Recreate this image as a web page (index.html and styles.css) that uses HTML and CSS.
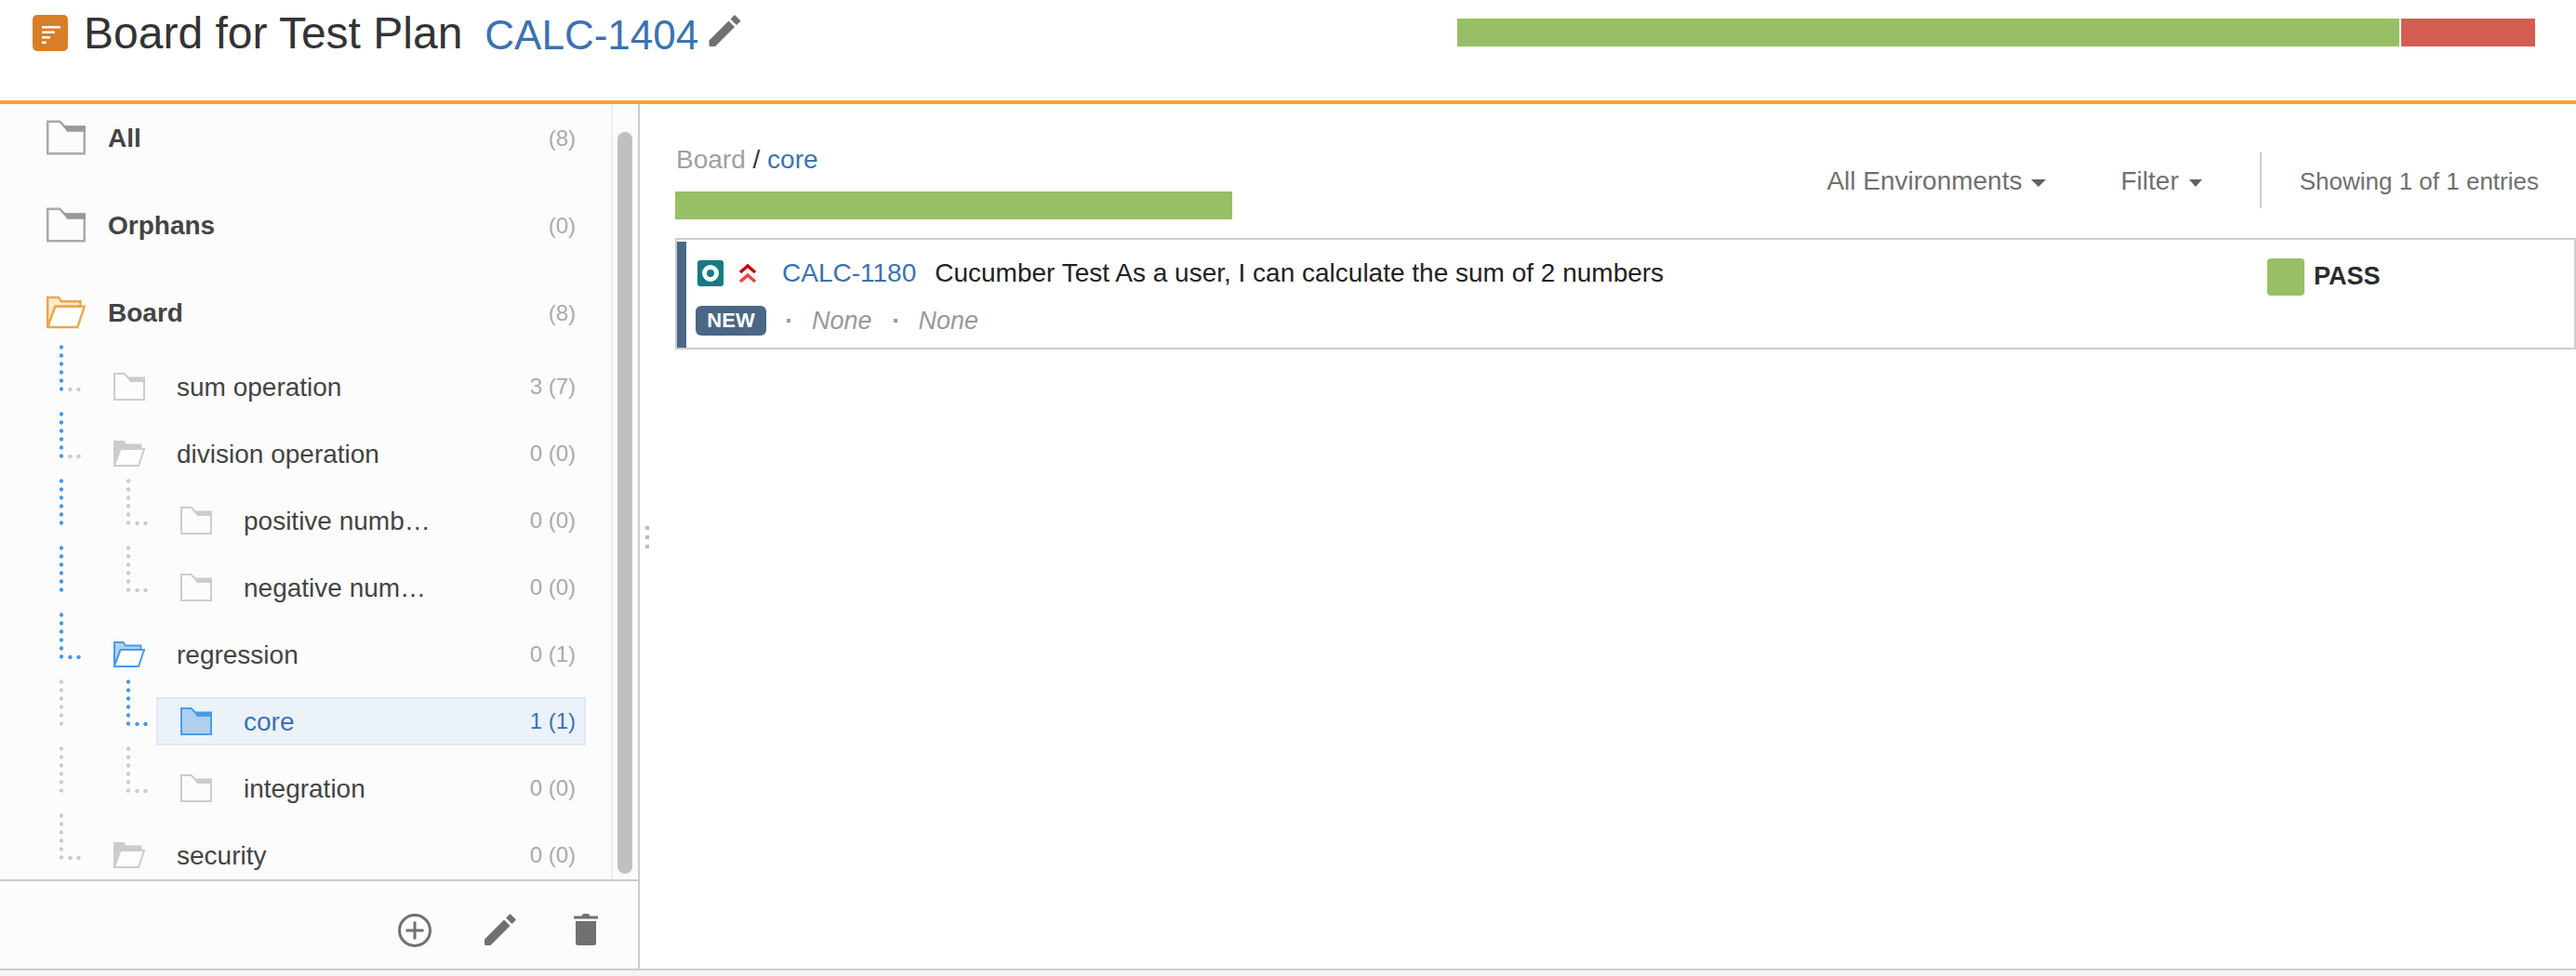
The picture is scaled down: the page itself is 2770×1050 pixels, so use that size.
FILE: index.html
```html
<!DOCTYPE html>
<html lang="en">
<head>
<meta charset="utf-8">
<title>Board for Test Plan</title>
<link rel="stylesheet" href="styles.css">
</head>
<body>
<svg class="defs" width="0" height="0" aria-hidden="true">
  <symbol id="closed" viewBox="0 0 34 30">
    <path class="fold-body" d="M1 1H11.500L16 5.500H33V29H1Z"/>
    <path class="fold-band" d="M11.500 1L16 5H34V10H18Z"/>
  </symbol>
  <symbol id="open" viewBox="0 0 34 28">
    <path class="fold-back" d="M1 27V1H10.500L13 4.500H29.500V9H8Z"/>
    <path class="fold-front" d="M7.500 9H33L27 27H1Z"/>
  </symbol>
  <symbol id="pencil" viewBox="0 0 34 34">
    <path d="M0 27.500L21 6.500L27.500 13L6.500 34H1.500Q0 34 0 32.500Z"/>
    <path d="M23 4.500L27.500 0L34 6.500L29.500 11Z"/>
  </symbol>
</svg>

<header class="topbar">
  <span class="plan-icon">
    <svg viewBox="0 0 38 39" width="38" height="39"><path class="plan-lines" d="M10 12H30V14.500H10ZM10 17.500H24V20H10ZM10 23H19V25.500H10ZM10 28.500H15V31H10Z"/></svg>
  </span>
  <h1 class="title">Board for Test Plan</h1>
  <a class="plan-key">CALC-1404</a>
  <svg class="title-pencil"><use href="#pencil"/></svg>
  <div class="overall">
    <span class="overall-pass"></span>
    <span class="overall-fail"></span>
  </div>
</header>

<main class="workspace">
  <aside class="sidebar">
    <div class="sidebar-scroll">
      <div class="folders">
        <div class="root-row">
          <svg class="root-icon tone-dark"><use href="#closed"/></svg>
          <span class="root-name">All</span><span class="count">(8)</span>
        </div>
        <div class="root-row">
          <svg class="root-icon tone-dark"><use href="#closed"/></svg>
          <span class="root-name">Orphans</span><span class="count">(0)</span>
        </div>
        <div class="root-row root-last">
          <svg class="root-icon tone-orange"><use href="#open"/></svg>
          <span class="root-name">Board</span><span class="count">(8)</span>
        </div>

        <div class="tree-row">
          <span class="guide elbow"><i class="v blue"></i><i class="h"></i></span>
          <div class="label">
            <svg class="leaf-icon tone-gray"><use href="#closed"/></svg>
            <span class="name">sum operation</span><span class="count">3 (7)</span>
          </div>
        </div>
        <div class="tree-row">
          <span class="guide elbow"><i class="v blue"></i><i class="h"></i></span>
          <div class="label">
            <svg class="open-icon tone-solid"><use href="#open"/></svg>
            <span class="name">division operation</span><span class="count">0 (0)</span>
          </div>
        </div>
        <div class="tree-row">
          <span class="pipe"><i class="v blue"></i></span>
          <span class="guide elbow"><i class="v"></i><i class="h"></i></span>
          <div class="label">
            <svg class="leaf-icon tone-gray"><use href="#closed"/></svg>
            <span class="name">positive numb…</span><span class="count">0 (0)</span>
          </div>
        </div>
        <div class="tree-row">
          <span class="pipe"><i class="v blue"></i></span>
          <span class="guide elbow"><i class="v"></i><i class="h"></i></span>
          <div class="label">
            <svg class="leaf-icon tone-gray"><use href="#closed"/></svg>
            <span class="name">negative num…</span><span class="count">0 (0)</span>
          </div>
        </div>
        <div class="tree-row">
          <span class="guide elbow"><i class="v blue"></i><i class="h blue"></i></span>
          <div class="label">
            <svg class="open-icon tone-blue"><use href="#open"/></svg>
            <span class="name">regression</span><span class="count">0 (1)</span>
          </div>
        </div>
        <div class="tree-row">
          <span class="pipe"><i class="v"></i></span>
          <span class="guide elbow"><i class="v blue"></i><i class="h blue"></i></span>
          <div class="label selected">
            <svg class="leaf-icon tone-selected"><use href="#closed"/></svg>
            <span class="name">core</span><span class="count">1 (1)</span>
          </div>
        </div>
        <div class="tree-row">
          <span class="pipe"><i class="v"></i></span>
          <span class="guide elbow"><i class="v"></i><i class="h"></i></span>
          <div class="label">
            <svg class="leaf-icon tone-gray"><use href="#closed"/></svg>
            <span class="name">integration</span><span class="count">0 (0)</span>
          </div>
        </div>
        <div class="tree-row">
          <span class="guide elbow"><i class="v"></i><i class="h"></i></span>
          <div class="label">
            <svg class="open-icon tone-solid"><use href="#open"/></svg>
            <span class="name">security</span><span class="count">0 (0)</span>
          </div>
        </div>
      </div>
      <div class="scroll-track"><span class="scroll-thumb"></span></div>
    </div>
    <div class="sidebar-actions">
      <svg class="act-plus" viewBox="0 0 36 36"><circle cx="18" cy="18" r="16.500"/><path d="M18 8.500V27.500M8.500 18H27.500"/></svg>
      <svg class="act-pencil"><use href="#pencil"/></svg>
      <svg class="act-trash" viewBox="0 0 26 34"><path d="M0 2.500H8.500Q9 0 11 0H15Q17 0 17.500 2.500H26V5.500H0ZM2 8H24V31.500Q24 34 21.500 34H4.500Q2 34 2 31.500Z"/></svg>
    </div>
  </aside>
  <span class="splitter"><i></i><i></i><i></i></span>

  <section class="content">
    <div class="toolbar">
      <div class="crumb-block">
        <div class="crumbs"><span class="crumb-root">Board</span> / <a class="crumb-leaf">core</a></div>
        <div class="folder-progress"></div>
      </div>
      <div class="tools">
        <span class="tool env">All Environments<i class="caret"></i></span>
        <span class="tool filter">Filter<i class="caret"></i></span>
        <span class="tools-sep"></span>
        <span class="entries">Showing 1 of 1 entries</span>
      </div>
    </div>

    <article class="test-card">
      <span class="card-stripe"></span>
      <div class="card-main">
        <div class="card-line">
          <span class="type-icon"></span>
          <svg class="prio" viewBox="0 0 20 22"><path class="prio-hi" d="M2 10L10 3L18 10"/><path class="prio-lo" d="M2 20L10 13L18 20"/></svg>
          <a class="test-key">CALC-1180</a>
          <span class="test-title">Cucumber Test As a user, I can calculate the sum of 2 numbers</span>
        </div>
        <div class="card-meta">
          <span class="badge">NEW</span>
          <span class="sep"></span>
          <em class="none">None</em>
          <span class="sep"></span>
          <em class="none">None</em>
        </div>
      </div>
      <div class="card-status">
        <span class="status-box"></span>
        <span class="status-text">PASS</span>
      </div>
    </article>
  </section>
</main>
<div class="page-foot"></div>
</body>
</html>
```

FILE: styles.css
```css
* { box-sizing: border-box; }
html, body { margin: 0; padding: 0; }
body {
  width: 2770px;
  height: 1050px;
  overflow: hidden;
  background: #fff;
  font-family: "Liberation Sans", Arial, sans-serif;
  color: #333;
  display: flex;
  flex-direction: column;
}
.defs { display: block; height: 0; }

/* header */
.topbar {
  flex: none;
  height: 112px;
  border-bottom: 4px solid #ffa42a;
  display: flex;
  align-items: flex-start;
  padding-left: 35px;
}
.plan-icon {
  flex: none;
  width: 38px;
  height: 39px;
  margin-top: 16px;
  border-radius: 5px;
  background: #d67f28;
  display: block;
}
.plan-icon svg { display: block; }
.plan-lines { fill: #fff; }
.title {
  margin: 8px 0 0 17px;
  font-size: 48px;
  line-height: 56px;
  font-weight: 400;
  color: #333;
}
.plan-key {
  margin: 10px 0 0 24px;
  font-size: 44px;
  line-height: 56px;
  color: #3b73af;
}
.title-pencil {
  flex: none;
  width: 35px;
  height: 34px;
  margin: 16px 0 0 11px;
  fill: #707070;
}
.overall {
  margin: 20px 44px 0 auto;
  width: 1159px;
  height: 30px;
  display: flex;
  gap: 2px;
}
.overall-pass { flex: 1013; background: #97bf65; }
.overall-fail { flex: 144; background: #d45d52; }

/* layout */
.workspace {
  flex: none;
  height: 930px;
  display: flex;
  position: relative;
}
.page-foot {
  flex: 1;
  border-top: 2px solid #ccc;
  background: #f5f5f5;
}

/* sidebar */
.sidebar {
  flex: none;
  width: 688px;
  border-right: 2px solid #ccc;
  background: #fcfcfc;
  display: flex;
  flex-direction: column;
}
.sidebar-scroll {
  flex: none;
  height: 834px;
  display: flex;
  overflow: hidden;
}
.folders { flex: none; width: 657px; }
.scroll-track {
  flex: none;
  width: 29px;
  border-left: 2px solid #eee;
  background: #fbfbfb;
  padding: 30px 0 0 5px;
}
.scroll-thumb {
  display: block;
  width: 16px;
  height: 798px;
  border-radius: 8px;
  background: #c0c0c0;
}
.root-row {
  height: 94px;
  padding: 17px 38px 0 50px;
  display: flex;
  align-items: flex-start;
}
.root-last { height: 71px; }
.root-icon { flex: none; width: 42px; height: 38px; }
.root-name {
  flex: 1;
  margin-left: 24px;
  font-size: 28px;
  line-height: 40px;
  font-weight: 700;
  color: #444;
}
.count {
  flex: none;
  font-size: 24px;
  line-height: 40px;
  color: #aaa;
}

/* icon tones */
.fold-body { fill: var(--fill, none); stroke: var(--line); stroke-width: 2; }
.fold-band { fill: var(--band); }
.fold-back { fill: var(--tint); stroke: var(--line); stroke-width: 2; }
.fold-front { fill: var(--face); stroke: var(--line); stroke-width: 2; }
.tone-dark { --line: #aaa; --band: #999; }
.tone-gray { --line: #ccc; --band: #ccc; }
.tone-orange { --line: #e8a84c; --tint: #fdebd0; --face: #fff; }
.tone-solid { --line: #ccc; --tint: #ccc; --face: #fdfdfd; }
.tone-blue { --line: #4a9be8; --tint: #aed0ee; --face: #fff; }
.tone-selected { --line: #4a9be8; --band: #4a9be8; --fill: #aed0ee; }

/* tree */
.tree-row {
  height: 72px;
  padding: 0 27px 0 64px;
  display: flex;
  align-items: flex-start;
}
.pipe { flex: none; width: 72px; display: block; }
.guide { flex: none; width: 32px; display: block; position: relative; }
.v {
  display: block;
  width: 4px;
  height: 50px;
  background-image: radial-gradient(circle at center, #ccc 2px, transparent 2.2px);
  background-size: 4px 9px;
  background-position: 0 -2px;
}
.h {
  position: absolute;
  left: 7px;
  top: 46px;
  width: 18px;
  height: 4px;
  background-image: radial-gradient(circle at center, #ccc 2px, transparent 2.2px);
  background-size: 9px 4px;
}
.v.blue, .h.blue {
  background-image: radial-gradient(circle at center, #4a9be8 2px, transparent 2.2px);
}
.label {
  flex: 1;
  min-width: 0;
  height: 52px;
  margin-top: 19px;
  padding: 0 9px 0 24px;
  border: 2px solid transparent;
  display: flex;
  align-items: center;
}
.label.selected { background: #ebf2fa; border-color: #e0e8f3; }
.label.selected .name, .label.selected .count { color: #3b73af; }
.leaf-icon { flex: none; width: 34px; height: 30px; }
.open-icon { flex: none; width: 34px; height: 28px; }
.name {
  flex: 1;
  min-width: 0;
  margin: 2px 0 0 34px;
  font-size: 28px;
  line-height: 40px;
  color: #444;
  white-space: nowrap;
}

/* sidebar actions */
.sidebar-actions {
  flex: 1;
  border-top: 2px solid #ccc;
  padding: 35px 43px 0 0;
  display: flex;
  justify-content: flex-end;
  align-items: flex-start;
}
.act-plus {
  flex: none;
  width: 36px;
  height: 36px;
  margin-right: 57px;
  fill: none;
  stroke: #707070;
  stroke-width: 3;
}
.act-pencil {
  flex: none;
  width: 34px;
  height: 34px;
  margin-right: 62px;
  fill: #707070;
}
.act-trash { flex: none; width: 26px; height: 34px; fill: #707070; }

.splitter {
  position: absolute;
  left: 694px;
  top: 454px;
  display: flex;
  flex-direction: column;
  gap: 6px;
}
.splitter i { display: block; width: 4px; height: 4px; background: #bbb; }

/* content */
.content {
  flex: 1;
  min-width: 0;
  padding-left: 38px;
  background: #fff;
}
.toolbar {
  height: 144px;
  display: flex;
  justify-content: space-between;
  align-items: flex-start;
}
.crumb-block { padding-top: 44px; }
.crumbs {
  font-size: 28px;
  line-height: 32px;
  color: #333;
  padding-left: 1px;
}
.crumb-root { color: #a39ea7; }
.crumb-leaf { color: #3b73af; }
.folder-progress {
  width: 599px;
  height: 30px;
  margin-top: 18px;
  background: #97bf65;
}
.tools {
  margin-top: 52px;
  padding-right: 40px;
  height: 60px;
  display: flex;
  align-items: center;
  color: #707070;
}
.tool {
  margin-top: 2px;
  font-size: 28px;
  line-height: 32px;
  display: flex;
  align-items: center;
}
.env { margin-right: 80px; }
.filter { margin-right: 62px; }
.caret {
  width: 0;
  height: 0;
  margin-left: 10px;
  margin-top: 3px;
  border-left: 8px solid transparent;
  border-right: 8px solid transparent;
  border-top: 8px solid #606060;
}
.filter .caret {
  margin-left: 11px;
  border-left-width: 7px;
  border-right-width: 7px;
}
.tools-sep {
  flex: none;
  width: 2px;
  height: 60px;
  background: #ccc;
  margin-right: 41px;
}
.entries { margin-top: 2px; font-size: 26px; line-height: 32px; }

/* card */
.test-card {
  height: 120px;
  border: 2px solid #ccc;
  display: flex;
  padding: 2px 0 0 0;
}
.card-stripe {
  flex: none;
  width: 10px;
  height: 114px;
  background: #4a6785;
}
.card-main { flex: 1; min-width: 0; padding: 18px 0 0 10px; }
.card-line {
  height: 32px;
  display: flex;
  align-items: center;
  padding-left: 2px;
}
.type-icon {
  flex: none;
  width: 28px;
  height: 28px;
  border-radius: 3px;
  background: #167a80;
  display: flex;
  align-items: center;
  justify-content: center;
}
.type-icon::before {
  content: "";
  box-sizing: border-box;
  width: 18px;
  height: 18px;
  border: 5px solid #fff;
  border-radius: 50%;
}
.prio {
  flex: none;
  width: 20px;
  height: 22px;
  margin-left: 16px;
  fill: none;
  stroke-width: 3.5;
}
.prio-hi { stroke: #c80000; }
.prio-lo { stroke: #ef4444; }
.test-key {
  margin-left: 27px;
  font-size: 28px;
  line-height: 32px;
  color: #3b73af;
}
.test-title {
  margin-left: 20px;
  font-size: 28px;
  line-height: 32px;
  color: #222;
}
.card-meta {
  margin-top: 19px;
  display: flex;
  align-items: center;
}
.badge {
  flex: none;
  width: 76px;
  height: 32px;
  border-radius: 6px;
  background: #4a6785;
  color: #fff;
  font-size: 22px;
  font-weight: 700;
  line-height: 32px;
  text-align: center;
}
.sep {
  flex: none;
  width: 4px;
  height: 4px;
  background: #999;
  margin: 0 23px;
}
.badge + .sep { margin-left: 22px; }
.none { flex: none; font-size: 27px; line-height: 32px; color: #999; font-style: italic; }
.card-status {
  flex: none;
  width: 330px;
  padding-top: 18px;
  display: flex;
  align-items: flex-start;
}
.status-box {
  flex: none;
  width: 40px;
  height: 40px;
  border-radius: 4px;
  background: #97bf65;
}
.status-text {
  margin-left: 10px;
  font-size: 27px;
  line-height: 38px;
  font-weight: 700;
  color: #2b2b2b;
}
```
